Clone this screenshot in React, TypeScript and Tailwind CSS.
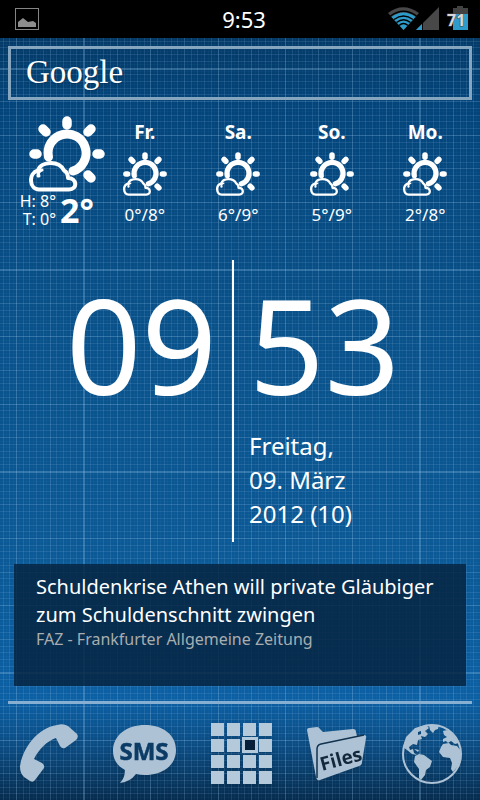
import React from "react";

const steps = Array.from({ length: 240 }, (_, i) => i);

function lineTone(i: number) {
  if (i % 20 === 0) return 0.27;
  if (i % 10 === 0) return 0.2;
  if (i % 2 === 0) return 0.13;
  return 0.03;
}

function Grid() {
  return (
    <svg className="absolute inset-0 h-full w-full" aria-hidden="true" fill="#a8d4f5">
      {steps.map((i) => (
        <rect key={"v" + i} x={Math.round(16 + (i - 4) * 3.36)} y={0} width={i === 24 || i === 124 ? 2 : 1} height="100%" opacity={lineTone(i - 4)} />
      ))}
      {steps.map((i) => (
        <rect key={"h" + i} x={0} y={Math.round(0.4 + i * 3.36)} width="100%" height={i % 60 === 20 ? 2 : 1} opacity={lineTone(i)} />
      ))}
    </svg>
  );
}

function SunCloud({ className }: { className: string }) {
  return (
    <svg viewBox="0 0 76 76" className={className} fill="none" stroke="#fff" aria-hidden="true">
      <path d="M19.500 41A19 19 0 1 1 44 55" strokeWidth="9" strokeLinecap="round" />
      <path d="M38 5v4M14 13l3 3M62 13l-3 3M5 38h3M68 38h3M59 59l3 3" strokeWidth="9.500" strokeLinecap="round" />
      <path d="M10 73.500C0 73 -1 57 9 54.500C12 45 30 44 35 54.500C38 56 39 58 39 62C48 62 49 73.500 40 73.500Z" strokeWidth="4" strokeLinejoin="round" />
      <path d="M9 54q0 4 1 6M9 60q0-5 4-6" strokeWidth="3" strokeLinecap="round" />
    </svg>
  );
}

const days = [
  { name: "Fr.", temp: "0°/8°" },
  { name: "Sa.", temp: "6°/9°" },
  { name: "So.", temp: "5°/9°" },
  { name: "Mo.", temp: "2°/8°" },
];

function StatusBar() {
  return (
    <header className="grid h-[38px] grid-cols-[1fr_auto_1fr] items-center bg-black px-[10px]">
      <svg className="ml-[5px] h-[22px] w-6" viewBox="0 0 24 22" aria-hidden="true">
        <rect x="0.500" y="0.500" width="23" height="21" fill="none" stroke="#858585" />
        <path d="M3 19v-5l5-4 5 4 5-1 3 2v4z" fill="#8d8d8d" />
      </svg>
      <span className="pl-2 text-[22px] leading-[38px] text-white">9:53</span>
      <svg className="mb-[2px] h-6 w-[82px] justify-self-end" viewBox="0 0 82 24" aria-hidden="true">
        <path d="M0 7Q15-4.500 31 7L15.500 24Z" fill="#484848" />
        <path d="M3.500 11Q15.500 2 27.500 11L15.500 24Z" fill="#2d9ccb" />
        <g fill="none" stroke="#000" strokeWidth="1.500">
          <path d="M2.500 10Q15.500 0.500 28.500 10" />
          <path d="M6 13.500Q15.500 6.500 25 13.500M8.500 16.500Q15.500 11 22.500 16.500M11 19.500Q15.500 15.500 20 19.500" />
        </g>
        <path d="M51 1v23H28Z" fill="#484848" />
        <path d="M34 18v6H28Z" fill="#2d9ccb" />
        <path d="M34.500 17v7" stroke="#000" />
        <path d="M65 2h4V0h6v2h5v6H65z" fill="#424242" />
        <path d="M65 8h15v16H65z" fill="#2d9ccb" />
        <text x="59" y="20" fontSize="16" fontWeight="700" fill="#d8d8d8" stroke="#444" strokeWidth="1" paintOrder="stroke">71</text>
      </svg>
    </header>
  );
}

function Phone() {
  return (
    <svg viewBox="0 0 60 62" className="h-[62px] w-[60px] drop-shadow-md" fill="#adc3d5" aria-hidden="true">
      <path d="M38 2Q44 0 49 3L58 11Q60 14 57 17L46 25Q43 26 41 23L37 15C28 18 20 26 15 36L23 40Q26 42 25 45L16 57Q14 60 11 58L5 54C2 51 1 48 1 43C4 24 19 5 38 2Z" />
    </svg>
  );
}

function Sms() {
  return (
    <svg viewBox="0 0 66 62" className="h-[62px] w-[66px] drop-shadow-md" aria-hidden="true">
      <path d="M33 2C51 2 64 12 64 27S51 52 33 52Q28 52 24 51Q18 59 8 60Q13 55 13 47C5 43 1 36 1 28C1 12 15 2 33 2Z" fill="#adc3d5" />
      <text x="32" y="37" textAnchor="middle" fontFamily="Open Sans, sans-serif" fontSize="24" fontWeight="700" fill="#0c3c66" stroke="#0c3c66" strokeWidth="0.500">SMS</text>
    </svg>
  );
}

function Apps() {
  return (
    <svg viewBox="0 0 62 62" className="h-[62px] w-[62px] drop-shadow-md" fill="#b4c9da" aria-hidden="true">
      {[0, 1, 2, 3].map((r) => [0, 1, 2, 3].map((c) => <rect key={`${r}${c}`} x={c * 16} y={r * 16} width="13" height="13" />))}
      <rect x="31" y="14" width="16" height="16" />
      <rect x="34" y="17" width="10" height="10" fill="#071f38" />
    </svg>
  );
}

function Files() {
  return (
    <svg viewBox="0 0 62 54" className="h-[54px] w-[62px] drop-shadow-md" aria-hidden="true">
      <path d="M1 3Q1 1 3 1L11 0Q13 0 14 2L17 5L47 2Q50 2 50 5L51 9L58 8Q61 8 60 11L56 35Q56 38 53 39L14 53Q11 54 10 50Z" fill="#adc3d5" />
      <path d="M11 51L11 22Q11 18 15 17L58 8" fill="none" stroke="#12324e" strokeWidth="1.500" />
      <text transform="translate(16 44) rotate(-15)" fontFamily="Open Sans, sans-serif" fontSize="19" fontWeight="700" fill="#14283b">Files</text>
    </svg>
  );
}

function Globe() {
  return (
    <svg viewBox="0 0 62 62" className="h-[62px] w-[62px] drop-shadow-md" fill="#adc3d5" aria-hidden="true">
      <circle cx="31" cy="31" r="29" fill="none" stroke="#adc3d5" strokeWidth="2" />
      <path d="M2 24L5 14L14 5L25 2L28 5L24 8L27 11L24 14L20 13L21 16L17 17L16 22L12 21L8 24L9 27L12 26L13 30L16 32L11 31L6 27Z" />
      <path d="M17 9L20 8L20 11L17 12Z" fill="#0c4577" />
      <path d="M13 26L18 27L17 29Z" />
      <path d="M14 33L18 31L23 32L31 38L29 44L25 47L24 52L20 57L18 55L18 46L13 39Z" />
      <path d="M28 2L38 2L37 6L34 7L32 10L29 7Z" />
      <path d="M42 8L46 7L50 9L56 17L58 20L54 21L50 18L47 20L45 18L42 19L42 16L46 14L43 12Z" />
      <path d="M40 24L42 21L48 20L50 22L56 23L60 28L60 34L57 43L52 49L50 46L51 40L49 35L42 34L38 29Z" />
    </svg>
  );
}

export default function App() {
  return (
    <div className="relative flex min-h-screen w-full flex-col overflow-hidden bg-[linear-gradient(to_bottom,#043a68_38px,#03457b_110px,#095088_300px,#0b5996_560px,#0b5fa3_700px,#0b4c83_745px,#062c4e_800px)] font-['Noto_Sans',sans-serif] text-white">
      <Grid />
      <div className="relative flex grow flex-col">
        <StatusBar />
        <button type="button" className="mx-2 mt-2 flex h-[54px] items-start border-[3px] border-[#86a5bf] px-[15px] text-left font-['Liberation_Serif',serif] text-[33px] leading-[46px] text-shadow-md">
          Google
        </button>
        <section className="mt-4 flex pl-[18px] pr-2" aria-label="Wetter">
          <div className="w-20">
            <SunCloud className="ml-[11px] h-[76px] w-[76px]" />
            <div className="flex">
              <div className="w-[38px] whitespace-nowrap text-right text-base leading-[18px]">
                <p>H: 8°</p>
                <p>T: 0°</p>
              </div>
              <p className="ml-1 text-[34px] font-bold leading-9">2°</p>
            </div>
          </div>
          <ul className="flex grow">
            {days.map((d) => (
              <li key={d.name} className="flex flex-1 flex-col items-center pt-1">
                <h2 className="text-[19px] font-bold leading-6">{d.name}</h2>
                <SunCloud className="mt-2 h-11 w-11" />
                <p className="mt-[7px] text-[17px] leading-6">{d.temp}</p>
              </li>
            ))}
          </ul>
        </section>
        <section className="mt-8 grid h-[282px] grid-cols-[234px_1fr]">
          <div className="border-r-2 border-white pr-[15px] text-right text-[132px] leading-[169px]">09</div>
          <div className="pl-[15px]">
            <p className="text-[132px] leading-[169px]">53</p>
            <p className="w-28 text-2xl leading-[34px]">Freitag,<br />09. März<br />2012 (10)</p>
          </div>
        </section>
        <article className="mx-[14px] mt-[22px] h-[122px] bg-[#062541]/85 px-[22px] pt-[9px]">
          <h3 className="text-xl leading-7">Schuldenkrise Athen will private Gläubiger zum Schuldenschnitt zwingen</h3>
          <p className="text-base leading-5 text-[#a8adb0]">FAZ - Frankfurter Allgemeine Zeitung</p>
        </article>
        <hr className="mx-2 mt-[15px] h-[3px] border-0 bg-[#86afd2]" />
        <nav className="flex grow items-center justify-between pl-[19px] pr-[17px] pt-1">
          <button type="button" aria-label="Telefon"><Phone /></button>
          <button type="button" aria-label="SMS"><Sms /></button>
          <button type="button" aria-label="Apps"><Apps /></button>
          <button type="button" aria-label="Dateien"><Files /></button>
          <button type="button" aria-label="Browser"><Globe /></button>
        </nav>
      </div>
    </div>
  );
}
